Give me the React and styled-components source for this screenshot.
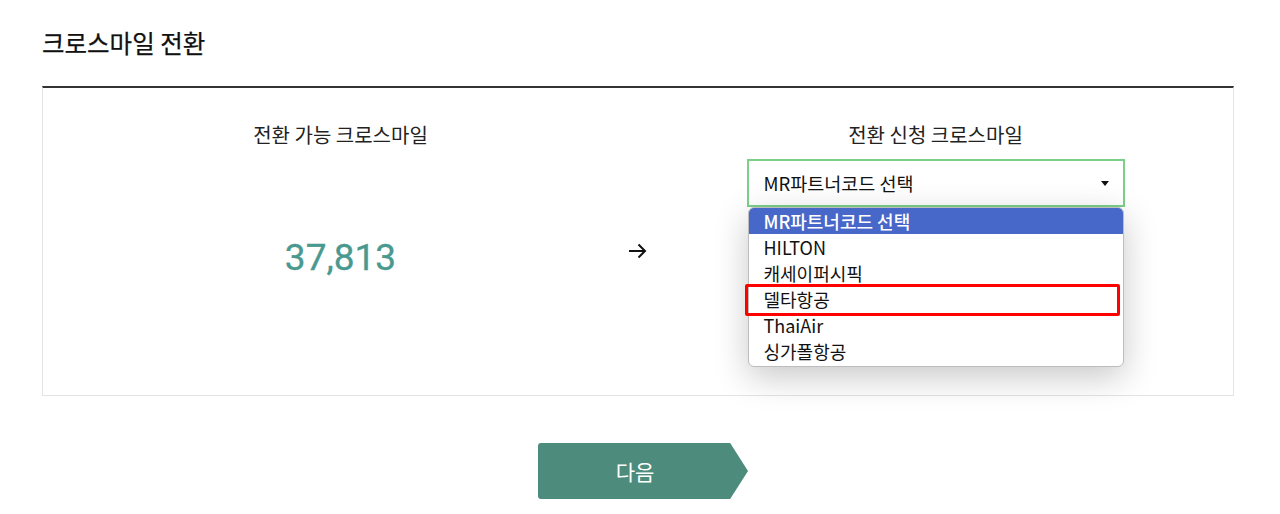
import React from 'react'
import styled, { createGlobalStyle } from 'styled-components'

const GlobalStyle = createGlobalStyle`
  html, body {
    margin: 0;
    padding: 0;
    background: #fff;
    font-family: "Noto Sans CJK KR", "Noto Sans", sans-serif;
    color: #111;
  }
`

const options = ['MR파트너코드 선택', 'HILTON', '캐세이퍼시픽', '델타항공', 'ThaiAir', '싱가폴항공']

function App() {
  return (
    <Page>
      <GlobalStyle />
      <Title>크로스마일 전환</Title>
      <Panel>
        <Column>
          <Label>전환 가능 크로스마일</Label>
          <Amount>37,813</Amount>
        </Column>
        <ArrowCell>
          <svg width="20" height="16" viewBox="0 0 20 16" fill="none">
            <path d="M1 8h16M10.5 1.5L17 8l-6.5 6.5" stroke="#111" strokeWidth="2" />
          </svg>
        </ArrowCell>
        <Column>
          <Label>전환 신청 크로스마일</Label>
          <SelectWrap>
            <SelectBox>
              <span>MR파트너코드 선택</span>
              <Caret />
            </SelectBox>
            <Dropdown>
              {options.map((o, i) => (
                <Option key={o} $active={i === 0} $marked={o === '델타항공'}>
                  {o}
                </Option>
              ))}
            </Dropdown>
          </SelectWrap>
        </Column>
      </Panel>
      <ButtonRow>
        <NextButton>다음</NextButton>
      </ButtonRow>
    </Page>
  )
}

const Page = styled.div`
  width: 1192px;
  margin: 0 0 0 42px;
  padding-top: 27px;
`

const Title = styled.h2`
  margin: 0 0 27px;
  font-size: 24.5px;
  line-height: 32px;
  font-weight: 400;
  color: #111;
  -webkit-text-stroke: 0.25px #111;
`

const Panel = styled.div`
  display: grid;
  grid-template-columns: 1fr 0px 1fr;
  height: 307px;
  border: 1px solid #e4e4e4;
  border-top: 2px solid #333;
`

const Column = styled.div`
  display: flex;
  flex-direction: column;
  align-items: center;
  padding-top: 33px;
`

const Label = styled.div`
  font-size: 20px;
  line-height: 28px;
  color: #222;
`

const Amount = styled.div`
  margin-top: 87px;
  font-family: Roboto, "Noto Sans", sans-serif;
  font-size: 37px;
  line-height: 44px;
  font-weight: 400;
  color: #4a9990;
  -webkit-text-stroke: 0.3px #4a9990;
`

const ArrowCell = styled.div`
  display: flex;
  justify-content: center;
  padding-top: 155px;
  & > svg {
    flex-shrink: 0;
  }
`

const SelectWrap = styled.div`
  position: relative;
  margin-top: 10px;
  width: 378px;
`

const SelectBox = styled.div`
  display: flex;
  align-items: center;
  justify-content: space-between;
  box-sizing: border-box;
  height: 48px;
  padding: 0 14px 0 15px;
  border: 2px solid #7bd089;
  font-size: 18.5px;
  color: #111;
`

const Caret = styled.span`
  width: 0;
  height: 0;
  border-left: 4.5px solid transparent;
  border-right: 4.5px solid transparent;
  border-top: 5px solid #111;
`

const Dropdown = styled.ul`
  position: absolute;
  top: 48px;
  left: 1px;
  width: 376px;
  margin: 0;
  padding: 0 0 2px;
  list-style: none;
  background: #fff;
  border: 1px solid #bdbdbd;
  box-sizing: border-box;
  border-radius: 6px;
  overflow: visible;
  box-shadow: 0 10px 34px rgba(0, 0, 0, 0.22);
`

const Option = styled.li`
  position: relative;
  height: 26px;
  line-height: 26px;
  padding-left: 15px;
  font-size: 18px;
  color: ${({ $active }) => ($active ? '#fff' : '#111')};
  background: ${({ $active }) => ($active ? '#4767c9' : 'transparent')};
  font-weight: ${({ $active }) => ($active ? 500 : 400)};
  border-radius: ${({ $active }) => ($active ? '5px 5px 0 0' : '0')};

  ${({ $marked }) =>
    $marked &&
    `
    &::after {
      content: '';
      position: absolute;
      left: -4px;
      right: 3px;
      top: -2px;
      bottom: -4px;
      border: 3px solid #ff0000;
      border-radius: 2px;
    }
  `}
`

const ButtonRow = styled.div`
  display: flex;
  justify-content: center;
  margin-top: 47px;
`

const NextButton = styled.button`
  width: 210px;
  height: 56px;
  margin-left: 10px;
  padding: 0 16px 0 0;
  border: none;
  background: #4d8c7d;
  color: #fff;
  font-family: "Noto Sans CJK KR", sans-serif;
  font-size: 21px;
  border-radius: 3px;
  clip-path: polygon(0 0, 91.5% 0, 100% 50%, 91.5% 100%, 0 100%);
  cursor: pointer;
`

export default App
